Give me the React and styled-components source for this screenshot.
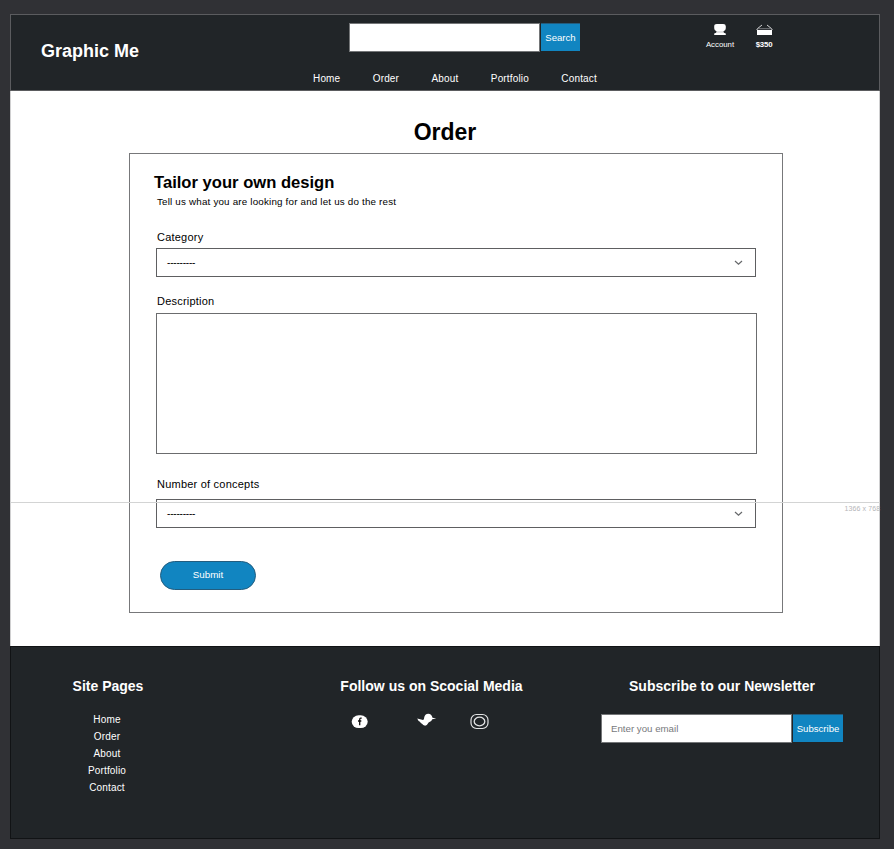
import React from "react";
import styled, { createGlobalStyle } from "styled-components";

const Global = createGlobalStyle`
  * { box-sizing: border-box; }
  body { margin: 0; background: #303135; font-family: "Liberation Sans", Arial, sans-serif; }
  h1, h2, h3, p, ul { margin: 0; padding: 0; }
  button, input, textarea { font-family: inherit; border-radius: 0; outline: none; }
`;

const Canvas = styled.div`
  height: 849px;
  padding: 14px 14px 10px 10px;
  overflow: hidden;
`;

const Page = styled.div`
  position: relative;
  display: grid;
  grid-template-rows: 77px 555px 193px;
  width: 870px;
  height: 825px;
`;

const Header = styled.header`
  display: grid;
  grid-template-columns: 292px 400px 1fr;
  background: #212528;
  border: 1px solid #5b5c5f;
  color: #fff;
`;

const Brand = styled.div`
  padding: 24px 0 0 30px;
  font-size: 18px;
  font-weight: bold;
  line-height: 25px;
  white-space: nowrap;
`;

const HeaderCenter = styled.div`
  display: flex;
  flex-direction: column;
  padding-top: 8px;
`;

const InlineForm = styled.div`
  display: flex;
  gap: 1px;
  height: 29px;
`;

const SearchForm = styled(InlineForm)`
  margin-left: 46px;
`;

const SignupForm = styled(InlineForm)`
  margin-top: 17px;
`;

const TextInput = styled.input`
  width: 191px;
  height: 29px;
  padding: 0 9px 1px;
  border: 1px solid #747678;
  background: #fff;
  color: #6f7174;
  font-size: 9.7px;
  &::placeholder { color: #77797c; opacity: 1; }
`;

const BlueButton = styled.button`
  width: ${(p) => p.$width}px;
  height: 28px;
  margin-top: ${(p) => p.$top || 0}px;
  padding: 0;
  border: 0;
  border-top: 1px solid #235b7c;
  background: #1185c1;
  color: #fff;
  font-size: 9.6px;
  white-space: nowrap;
`;

const Nav = styled.nav`
  display: flex;
  gap: 32.4px;
  margin: 19px 0 0 10px;
`;

const NavLink = styled.a`
  font-size: 10px;
  line-height: 16px;
  letter-spacing: 0.16px;
  white-space: nowrap;
  color: #fff;
`;

const Tools = styled.div`
  display: flex;
  padding-top: 8px;
`;

const Tool = styled.div`
  display: flex;
  flex-direction: column;
  align-items: center;
  width: ${(p) => p.$width}px;
  font-size: 7.8px;
  font-weight: ${(p) => (p.$bold ? "bold" : "normal")};
  letter-spacing: ${(p) => (p.$bold ? "-0.2px" : "0")};
  line-height: 10px;
  svg { display: block; margin-bottom: 4px; }
`;

const Main = styled.main`
  padding: 27px 0 0 118px;
  background: #fff;
  border-left: 1px solid #d0d0d1;
  border-right: 1px solid #d0d0d1;
`;

const Title = styled.h1`
  width: 632px;
  height: 35px;
  text-align: center;
  font-size: 23px;
  line-height: 28px;
  color: #000;
`;

const Card = styled.form`
  display: flex;
  flex-direction: column;
  width: 654px;
  height: 460px;
  padding: 17px 0 0 26px;
  border: 1px solid #77787a;
`;

const CardTitle = styled.h2`
  margin-left: -2px;
  font-size: 16.6px;
  line-height: 24px;
`;

const CardText = styled.p`
  padding-left: 1px;
  font-size: 9.8px;
  line-height: 14px;
  letter-spacing: 0.19px;
  white-space: nowrap;
`;

const Label = styled.label`
  height: 17px;
  margin-top: ${(p) => p.$top}px;
  padding-left: 1px;
  font-size: 11px;
  line-height: 17px;
  letter-spacing: 0.22px;
  color: #000;
`;

const SelectBox = styled.div`
  display: flex;
  align-items: center;
  justify-content: space-between;
  width: 600px;
  height: 29px;
  margin-top: ${(p) => p.$top}px;
  padding: 0 12px 0 10px;
  border: 1px solid #5e5f61;
  color: #000;
  font-size: 10px;
  letter-spacing: -0.2px;
`;

const TextArea = styled.textarea`
  display: block;
  width: 601px;
  height: 141px;
  margin-top: 3px;
  border: 1px solid #6b6c6e;
  background: #fff;
  resize: none;
`;

const Submit = styled.button`
  width: 96px;
  height: 29px;
  margin: 33px 0 0 4px;
  padding: 0 0 2px;
  border: 1px solid #235d7f;
  border-radius: 15px;
  background: #1185c1;
  color: #fff;
  font-size: 9.8px;
`;

const FoldMark = styled.div`
  position: absolute;
  top: 488px;
  left: 0;
  right: 0;
  height: 14px;
  border-top: 1px solid #d3d4d4;
  color: #b5b6b8;
  font-size: 7px;
  line-height: 12px;
  letter-spacing: 0.1px;
`;

const FoldText = styled.span`
  display: block;
  margin-left: 834.5px;
  white-space: nowrap;
`;

const Footer = styled.footer`
  display: grid;
  grid-template-columns: 194px 453px 1fr;
  padding-top: 28px;
  background: #212528;
  border: 1px solid #111315;
  color: #fff;
`;

const FooterColumn = styled.section`
  display: flex;
  flex-direction: column;
  align-items: center;
`;

const NewsletterColumn = styled(FooterColumn)`
  justify-self: start;
  width: 242px;
  margin-left: -57px;
`;

const FooterTitle = styled.h3`
  height: 22px;
  font-size: 14px;
  line-height: 22px;
  letter-spacing: ${(p) => p.$spacing || 0}px;
  white-space: nowrap;
`;

const LinkList = styled.ul`
  display: flex;
  flex-direction: column;
  align-items: center;
  margin-top: 15px;
  padding-right: 2px;
  list-style: none;
  li { height: 17px; display: flex; }
`;

const Socials = styled.div`
  display: grid;
  grid-template-columns: 66px 53px 20px;
  align-self: flex-start;
  margin: 16px 0 0 146px;
`;

const links = ["Home", "Order", "About", "Portfolio", "Contact"];

const AccountIcon = () => (
  <svg width="14" height="13" viewBox="0 0 14 13" fill="#fff">
    <path d="M3.800 1h6.400Q12.800 1 12.800 3.300v2Q12.800 8 10.300 8.500 10.300 10 12.800 10.500V12H1.200v-1.500Q3.700 10 3.700 8.500 1.200 8 1.200 5.300v-2Q1.200 1 3.800 1Z" />
    <path d="M3.500 9h7" stroke="#9a9c9e" strokeWidth=".6" />
  </svg>
);

const BasketIcon = () => (
  <svg width="17" height="13" viewBox="0 0 17 13">
    <path d="M1 7V6L6 2M16 7V6l-5-4" fill="none" stroke="#d5d6d7" strokeWidth="1" />
    <path d="M1 5.700h15" stroke="#8c8e90" strokeWidth=".8" />
    <path d="M1 7h15v5H1Z" fill="#fff" />
  </svg>
);

const Chevron = () => (
  <svg width="9" height="6" viewBox="0 0 9 6">
    <path d="M1 1l3.500 3.300L8 1" fill="none" stroke="#66686a" strokeWidth="1.200" />
  </svg>
);

const FacebookIcon = () => (
  <svg width="18" height="17" viewBox="0 0 18 17">
    <rect x="0.700" y="2.300" width="16" height="12.700" rx="7" ry="6.300" fill="#fff" />
    <path d="M10.700 5.200H9.700Q8.700 5.200 8.700 6.500V12.200M7 8h3.300" fill="none" stroke="#111" strokeWidth="1.300" />
  </svg>
);

const TwitterIcon = () => (
  <svg width="20" height="17" viewBox="0 0 20 17" fill="#fff">
    <path d="M.2 5.400 6 7Q7.200 6.600 7.200 4.500 7.800.7 11.300.7q3.200 0 4.200 4l3.700.8-3.900.8q-.6 2.500-3.700 3.100Q9.800 13 7.600 12.600 6 12 5.300 10.900 3.600 10.300 2.900 8.800 1.100 7.700.2 5.400Z" />
  </svg>
);

const InstagramIcon = () => (
  <svg width="19" height="17" viewBox="0 0 19 17" fill="none" stroke="#e2e3e4">
    <rect x="1" y="1.500" width="17" height="14" rx="5.500" strokeWidth="1.200" />
    <ellipse cx="9.500" cy="8.500" rx="5.300" ry="4.300" strokeWidth="1.300" />
  </svg>
);

export default function App() {
  return (
    <Canvas>
      <Global />
      <Page>
        <Header>
          <Brand>Graphic Me</Brand>
          <HeaderCenter>
            <SearchForm>
              <TextInput aria-label="Search" />
              <BlueButton $width={39}>Search</BlueButton>
            </SearchForm>
            <Nav>
              {links.map((l) => <NavLink key={l}>{l}</NavLink>)}
            </Nav>
          </HeaderCenter>
          <Tools>
            <Tool $width={34}><AccountIcon />Account</Tool>
            <Tool $width={54} $bold><BasketIcon />$350</Tool>
          </Tools>
        </Header>
        <Main>
          <Title>Order</Title>
          <Card>
            <CardTitle>Tailor your own design</CardTitle>
            <CardText>Tell us what you are looking for and let us do the rest</CardText>
            <Label $top={20}>Category</Label>
            <SelectBox $top={2}>---------<Chevron /></SelectBox>
            <Label $top={16}>Description</Label>
            <TextArea aria-label="Description" />
            <Label $top={22}>Number of concepts</Label>
            <SelectBox $top={6}>---------<Chevron /></SelectBox>
            <Submit type="button">Submit</Submit>
          </Card>
        </Main>
        <Footer>
          <FooterColumn>
            <FooterTitle>Site Pages</FooterTitle>
            <LinkList>
              {links.map((l) => <li key={l}><NavLink>{l}</NavLink></li>)}
            </LinkList>
          </FooterColumn>
          <FooterColumn>
            <FooterTitle $spacing={0.01}>Follow us on Scocial Media</FooterTitle>
            <Socials>
              <FacebookIcon />
              <TwitterIcon />
              <InstagramIcon />
            </Socials>
          </FooterColumn>
          <NewsletterColumn>
            <FooterTitle>Subscribe to our Newsletter</FooterTitle>
            <SignupForm>
              <TextInput placeholder="Enter you email" />
              <BlueButton $width={50}>Subscribe</BlueButton>
            </SignupForm>
          </NewsletterColumn>
        </Footer>
        <FoldMark><FoldText>1366 x 768</FoldText></FoldMark>
      </Page>
    </Canvas>
  );
}
